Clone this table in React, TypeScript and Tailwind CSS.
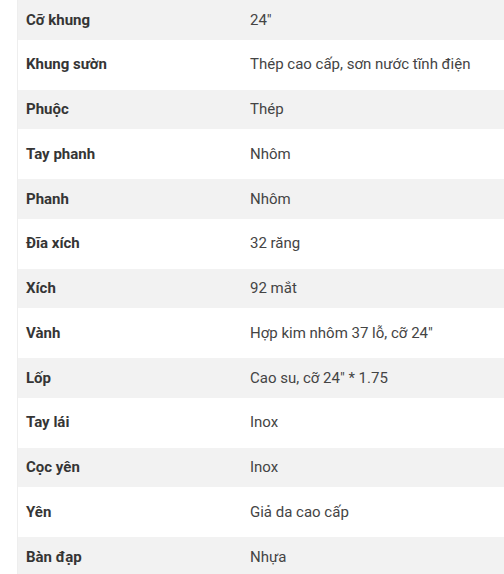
const specs: [string, string][] = [
  ['Cỡ khung', '24"'],
  ['Khung sườn', 'Thép cao cấp, sơn nước tĩnh điện'],
  ['Phuộc', 'Thép'],
  ['Tay phanh', 'Nhôm'],
  ['Phanh', 'Nhôm'],
  ['Đĩa xích', '32 răng'],
  ['Xích', '92 mắt'],
  ['Vành', 'Hợp kim nhôm 37 lỗ, cỡ 24"'],
  ['Lốp', 'Cao su, cỡ 24" * 1.75'],
  ['Tay lái', 'Inox'],
  ['Cọc yên', 'Inox'],
  ['Yên', 'Giả da cao cấp'],
  ['Bàn đạp', 'Nhựa'],
];

export default function App() {
  return (
    <div className="h-[574px] overflow-hidden bg-white pl-[17px] font-['Roboto',sans-serif] text-[15px]">
      <div className="border-l border-[#eeeeee]">
        {specs.map(([label, value], i) => (
          <div
            key={label}
            className={
              i % 2 === 0
                ? 'flex h-[39.5px] items-center bg-[#f2f2f2]'
                : 'flex h-[50px] items-center bg-white'
            }
          >
            <div className="w-[232px] pl-[8px] font-bold text-[#353535]">{label}</div>
            <div className="flex-1 text-[#444444]">{value}</div>
          </div>
        ))}
      </div>
    </div>
  );
}
